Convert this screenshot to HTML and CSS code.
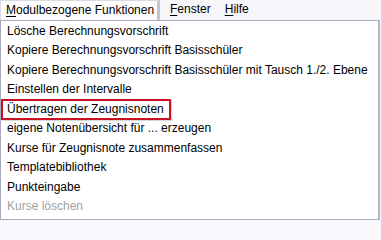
FILE: index.html
```html
<!DOCTYPE html>
<html lang="de">
<head>
<meta charset="utf-8">
<link rel="stylesheet" href="styles.css">
</head>
<body>
<div class="menubar">
  <div class="top-item active"><u>M</u>odulbezogene Funktionen</div>
  <div class="top-item"><u>F</u>enster</div>
  <div class="top-item"><u>H</u>ilfe</div>
</div>
<div class="dropdown">
  <div class="item">Lösche Berechnungsvorschrift</div>
  <div class="item">Kopiere Berechnungsvorschrift Basisschüler</div>
  <div class="item">Kopiere Berechnungsvorschrift Basisschüler mit Tausch 1./2. Ebene</div>
  <div class="item">Einstellen der Intervalle</div>
  <div class="item marked">Übertragen der Zeugnisnoten</div>
  <div class="item">eigene Notenübersicht für ... erzeugen</div>
  <div class="item">Kurse für Zeugnisnote zusammenfassen</div>
  <div class="item">Templatebibliothek</div>
  <div class="item">Punkteingabe</div>
  <div class="item disabled">Kurse löschen</div>
</div>
</body>
</html>
```
FILE: styles.css
```css
html, body {
  margin: 0;
  padding: 0;
}
body {
  width: 381px;
  height: 224px;
  overflow: hidden;
  background: #f9f9fd;
  font-family: "Liberation Sans", Arial, sans-serif;
  font-size: 12px;
  color: #000;
}
.menubar {
  display: flex;
  height: 20px;
  background: #f6f6fb;
}
.top-item {
  box-sizing: border-box;
  height: 20px;
  line-height: 19px;
  padding: 0 7px;
  white-space: nowrap;
}
.top-item.active {
  width: 160px;
  background: #fdfdfe;
  border: 1px solid #d9d9e3;
  border-bottom: none;
  border-right: 3px solid #c6c6ce;
  padding-left: 5px;
  padding-right: 6px;
  margin-right: 3px;
}
.top-item u {
  text-decoration-thickness: 1px;
  text-underline-offset: 2px;
}
.dropdown {
  box-sizing: border-box;
  width: 380px;
  height: 200px;
  background: #fff;
  border: 1px solid #a9a9bd;
  border-right: 2px solid #b4b4c4;
  padding-top: 1px;
}
.item {
  box-sizing: border-box;
  height: 19.45px;
  line-height: 19px;
  padding-left: 6px;
  white-space: nowrap;
}
.item.marked {
  width: 170px;
  border: 2px solid #c81020;
  padding-left: 4px;
  line-height: 17px;
  height: 21px;
  margin-top: -1px;
  margin-bottom: -0.55px;
  box-shadow: 1px 1px 1px rgba(0,0,0,0.15);
}
.item.disabled {
  color: #a0a0a0;
}
```
